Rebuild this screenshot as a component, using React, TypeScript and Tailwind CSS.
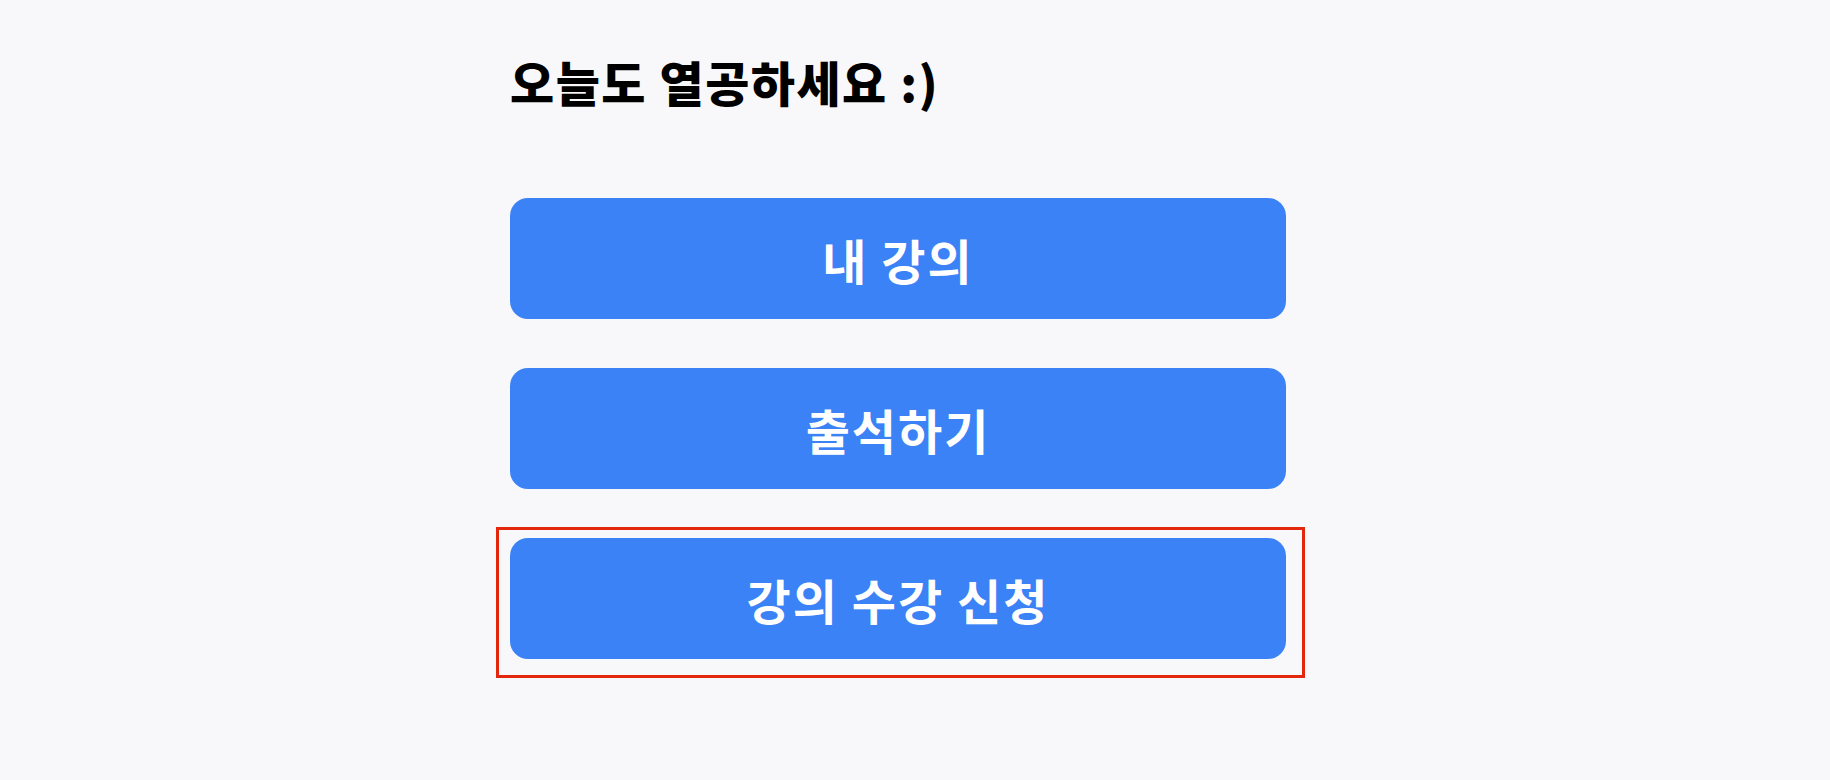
import React from "react";

export default function App() {
  const menus = [
    { name: "내 강의", highlighted: false },
    { name: "출석하기", highlighted: false },
    { name: "강의 수강 신청", highlighted: true },
  ];

  return (
    <div
      className="min-h-screen w-full bg-[#f8f8fa] pl-[510px] pt-[52px]"
      style={{ fontFamily: '"Noto Sans CJK KR", "Noto Sans", sans-serif' }}
    >
      <h1 className="text-[48px] leading-[58px] font-black text-black tracking-[1.5px]">
        오늘도 열공하세요 :)
      </h1>

      <div className="mt-[88px] flex w-[776px] flex-col gap-[49px]">
        {menus.map((menu) => (
          <div key={menu.name} className="relative">
            <button className="flex h-[121px] w-full items-center justify-center rounded-[18px] bg-[#3b82f6] text-[48px] font-semibold tracking-[2px] text-white">
              {menu.name}
            </button>
            {menu.highlighted && (
              <div className="pointer-events-none absolute -top-[11px] -bottom-[19px] -left-[14px] -right-[19px] border-[3px] border-[#e3270c]" />
            )}
          </div>
        ))}
      </div>
    </div>
  );
}
